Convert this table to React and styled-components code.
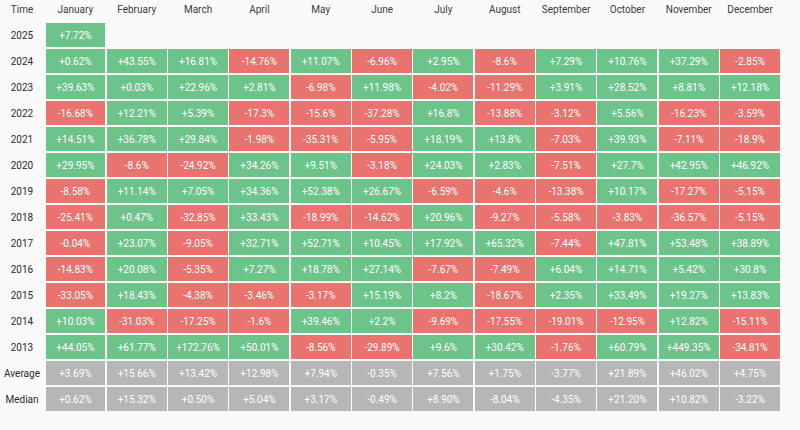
import React from "react";
import styled, { createGlobalStyle } from "styled-components";

const Global = createGlobalStyle`
  html, body { margin: 0; padding: 0; background: #fafafa; }
  body { font-family: Roboto, "Liberation Sans", sans-serif; }
`;

const months = ["January","February","March","April","May","June","July","August","September","October","November","December"];

const rows = [
  ["2025", ["+7.72%"]],
  ["2024", ["+0.62%","+43.55%","+16.81%","-14.76%","+11.07%","-6.96%","+2.95%","-8.6%","+7.29%","+10.76%","+37.29%","-2.85%"]],
  ["2023", ["+39.63%","+0.03%","+22.96%","+2.81%","-6.98%","+11.98%","-4.02%","-11.29%","+3.91%","+28.52%","+8.81%","+12.18%"]],
  ["2022", ["-16.68%","+12.21%","+5.39%","-17.3%","-15.6%","-37.28%","+16.8%","-13.88%","-3.12%","+5.56%","-16.23%","-3.59%"]],
  ["2021", ["+14.51%","+36.78%","+29.84%","-1.98%","-35.31%","-5.95%","+18.19%","+13.8%","-7.03%","+39.93%","-7.11%","-18.9%"]],
  ["2020", ["+29.95%","-8.6%","-24.92%","+34.26%","+9.51%","-3.18%","+24.03%","+2.83%","-7.51%","+27.7%","+42.95%","+46.92%"]],
  ["2019", ["-8.58%","+11.14%","+7.05%","+34.36%","+52.38%","+26.67%","-6.59%","-4.6%","-13.38%","+10.17%","-17.27%","-5.15%"]],
  ["2018", ["-25.41%","+0.47%","-32.85%","+33.43%","-18.99%","-14.62%","+20.96%","-9.27%","-5.58%","-3.83%","-36.57%","-5.15%"]],
  ["2017", ["-0.04%","+23.07%","-9.05%","+32.71%","+52.71%","+10.45%","+17.92%","+65.32%","-7.44%","+47.81%","+53.48%","+38.89%"]],
  ["2016", ["-14.83%","+20.08%","-5.35%","+7.27%","+18.78%","+27.14%","-7.67%","-7.49%","+6.04%","+14.71%","+5.42%","+30.8%"]],
  ["2015", ["-33.05%","+18.43%","-4.38%","-3.46%","-3.17%","+15.19%","+8.2%","-18.67%","+2.35%","+33.49%","+19.27%","+13.83%"]],
  ["2014", ["+10.03%","-31.03%","-17.25%","-1.6%","+39.46%","+2.2%","-9.69%","-17.55%","-19.01%","-12.95%","+12.82%","-15.11%"]],
  ["2013", ["+44.05%","+61.77%","+172.76%","+50.01%","-8.56%","-29.89%","+9.6%","+30.42%","-1.76%","+60.79%","+449.35%","-34.81%"]],
];

const stats = [
  ["Average", ["+3.69%","+15.66%","+13.42%","+12.98%","+7.94%","-0.35%","+7.56%","+1.75%","-3.77%","+21.89%","+46.02%","+4.75%"]],
  ["Median", ["+0.62%","+15.32%","+0.50%","+5.04%","+3.17%","-0.49%","+8.90%","-8.04%","-4.35%","+21.20%","+10.82%","-3.22%"]],
];

const Table = styled.div`
  width: 780px;
  display: grid;
  grid-template-columns: 44px repeat(12, 1fr);
  grid-template-rows: 21px;
  grid-auto-rows: 24px;
  column-gap: 1.5px;
  row-gap: 2px;
`;

const Head = styled.div`
  display: flex;
  align-items: center;
  justify-content: center;
  font-size: 10px;
  color: #3a3a3a;
  padding-bottom: 3px;
  white-space: nowrap;
`;

const Label = styled.div`
  display: flex;
  align-items: center;
  justify-content: center;
  font-size: 10px;
  color: #2a2a2a;
  white-space: nowrap;
`;

const colors = { up: "#6dc48b", down: "#e8736f", stat: "#b6b6b6" };

const Cell = styled.div`
  display: flex;
  align-items: center;
  justify-content: center;
  font-size: 10px;
  color: #ffffff;
  background: ${(p) => colors[p.$kind]};
  white-space: nowrap;
`;

const Empty = styled.div``;

export default function App() {
  return (
    <>
      <Global />
      <Table>
        <Head>Time</Head>
        {months.map((m) => <Head key={m}>{m}</Head>)}
        {rows.map(([y, vals]) => (
          <React.Fragment key={y}>
            <Label>{y}</Label>
            {months.map((m, i) =>
              vals[i] ? (
                <Cell key={m} $kind={vals[i].startsWith("-") ? "down" : "up"}>{vals[i]}</Cell>
              ) : (
                <Empty key={m} />
              )
            )}
          </React.Fragment>
        ))}
        {stats.map(([y, vals]) => (
          <React.Fragment key={y}>
            <Label>{y}</Label>
            {vals.map((v, i) => <Cell key={i} $kind="stat">{v}</Cell>)}
          </React.Fragment>
        ))}
      </Table>
    </>
  );
}
